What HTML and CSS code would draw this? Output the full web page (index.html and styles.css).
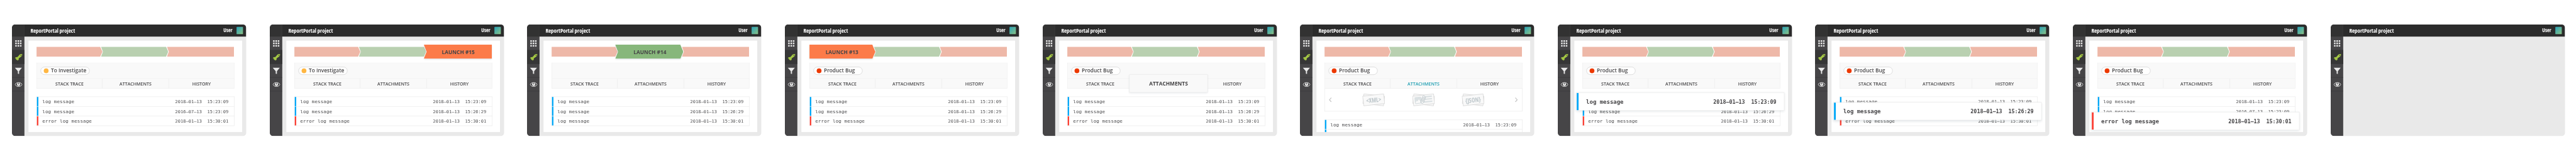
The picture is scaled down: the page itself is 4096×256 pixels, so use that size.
FILE: index.html
```html
<!DOCTYPE html>
<html lang="en">
<head>
<meta charset="utf-8">
<title>ReportPortal project</title>
<link rel="stylesheet" href="styles.css">
</head>
<body>
<svg class="defs" aria-hidden="true">
  <symbol id="i-grid" viewBox="0 0 16 16"><path d="M0 0h4v4H0zM6 0h4v4H6zM12 0h4v4h-4zM0 6h4v4H0zM6 6h4v4H6zM12 6h4v4h-4zM0 12h4v4H0zM6 12h4v4H6zM12 12h4v4h-4z"/></symbol>
  <symbol id="i-rocket" viewBox="0 0 19 17"><path fill-rule="evenodd" d="M18.8.2C15 0 12.6 1 10.8 3L6.600 8 2.600 8.300 0 10.600l3 .6c-.6 2 .4 3.900 3.300 4L6.700 17l3-2.600.3-3.400L15.500 7.200C18.200 5 19 3 18.800.2zM15.700 2.200a1.200 1.200 0 1 1 0 2.400 1.200 1.200 0 0 1 0-2.400z"/></symbol>
  <symbol id="i-funnel" viewBox="0 0 18 16"><path d="M0 0h18l-7.300 9v7l-3-.8V9z"/></symbol>
  <symbol id="i-eye" viewBox="0 0 19 12"><path fill="none" stroke="currentColor" stroke-width="1.400" d="M.7 6C3 2.500 6 .8 9.500.8S16 2.500 18.300 6C16 9.500 13 11.200 9.500 11.200S3 9.500.7 6z"/><circle cx="9.500" cy="5.600" r="4"/><circle class="pupil" cx="9.500" cy="4.100" r="1.500"/></symbol>
  <symbol id="i-sheets" viewBox="0 0 56 32"><path d="M4 1.300L55.300 7.300 52.700 31 1.300 25z"/><path d="M.7 7L53 1.300 55.500 25.300 3.700 31z"/></symbol>
</svg>
<main class="strip" id="strip"></main>
<script src="app.js"></script>
</body>
</html>
```
FILE: app.js
```js
const icon = (name) => `<svg class="icon icon-${name}"><use href="#i-${name}"/></svg>`;

const LAUNCHES = [['failed', 'LAUNCH #13'], ['passed', 'LAUNCH #14'], ['failed', 'LAUNCH #15']];
const TABS = ['STACK TRACE', 'ATTACHMENTS', 'HISTORY'];
const info = (date, time) => ({ level: 'info', text: 'log message', date, time });
const error = (date, time) => ({ level: 'error', text: 'error log message', date, time });
const FIRST = info('2018–01–13', '15:23:09');
const SECOND = info('2018–01–13', '15:26:29');
const OLD = info('2016–07–13', '15:23:09');
const THIRD = error('2018–01–13', '15:30:01');
const LOGS = [FIRST, SECOND, THIRD];

const SCREENS = [
  { defect: 'investigate', logs: [FIRST, OLD, THIRD] },
  { defect: 'investigate', launch: 2, logs: LOGS },
  { launch: 1, logs: [FIRST, SECOND, info('2018–01–13', '15:30:01')] },
  { defect: 'bug', launch: 0, logs: LOGS },
  { defect: 'bug', raisedTab: 1, logs: LOGS },
  { defect: 'bug', openTab: 1, logs: [FIRST, { level: 'info' }] },
  { defect: 'bug', raisedLog: 0, logs: LOGS },
  { defect: 'bug', raisedLog: 1, logs: LOGS },
  { defect: 'bug', raisedLog: 2, logs: [FIRST, OLD, THIRD] },
  null,
];

const DEFECTS = { investigate: 'To Investigate', bug: 'Product Bug' };

const logBody = (l) => l.text
  ? `<span class="message">${l.text}</span><span class="date">${l.date}</span><span class="time">${l.time}</span>`
  : '';

const carousel = `
  <div class="carousel">
    <svg class="chevron" viewBox="0 0 7 12"><path d="M6 .8L1.200 6 6 11.200"/></svg>
    <svg class="sheets" viewBox="0 0 56 32"><use href="#i-sheets"/><text x="9.500" y="22.500" textLength="37.500" lengthAdjust="spacingAndGlyphs" transform="rotate(-6 28 16)">&lt;XML&gt;</text></svg>
    <svg class="sheets" viewBox="0 0 56 32"><use href="#i-sheets"/>
      <g class="preview" transform="rotate(-6 28 16)">
        <rect x="6" y="7.500" width="17" height="17" rx="2.500"/><path d="M31 7.500h18.500v3.300H31zM31 13.500h18.500v3.300H31zM27 20h22.500v3.300H27z"/>
        <path class="hills" d="M8 22.500v-2l3-4 2 2 3.500-5 4 6.500v2.500z"/>
      </g>
      <path class="clip" transform="rotate(22 27 15)" d="M31 8v13a3.800 4.500 0 0 1-7.600 0V7a3.200 4 0 0 1 5.200 0v12.500a1.500 2 0 0 1-2.700 0V9"/>
    </svg>
    <svg class="sheets" viewBox="0 0 56 32"><use href="#i-sheets"/><text x="8.500" y="22.500" textLength="39" lengthAdjust="spacingAndGlyphs" transform="rotate(-6 28 16)">{JSON}</text></svg>
    <svg class="chevron" viewBox="0 0 7 12"><path d="M1 .8L5.800 6 1 11.200"/></svg>
  </div>`;

function card(s) {
  const launches = LAUNCHES.map(([status, label], i) =>
    `<div class="launch launch-${i + 1} ${s.launch === i ? 'active' : ''}"><div class="shape ${status}">${s.launch === i ? label : ''}</div></div>`).join('');
  const defect = s.defect ? `<span class="defect ${s.defect}">${DEFECTS[s.defect]}</span>` : '';
  const tabs = TABS.map((t, i) =>
    `<div class="tab ${s.openTab === i ? 'open' : ''}">${s.raisedTab === i ? `<div class="raised-tab">${t}</div>` : t}</div>`).join('');
  const logs = s.logs.map((l, i) =>
    `<div class="log ${l.level}">${s.raisedLog === i ? `<div class="raised-log ${l.level}">${logBody(l)}</div>` : logBody(l)}</div>`).join('');
  return `<section class="card">
    <div class="launches">${launches}</div>
    <div class="panel"><div class="defects">${defect}</div><div class="tabs">${tabs}</div>${s.openTab === undefined ? '' : carousel}</div>
    <div class="logs">${logs}</div>
  </section>`;
}

document.getElementById('strip').innerHTML = SCREENS.map((s) => `
  <div class="cell"><article class="window">
    <nav class="sidebar">
      <div class="logo"></div>
      <div class="item">${icon('grid')}</div>
      <div class="item selected">${icon('rocket')}</div>
      <div class="item">${icon('funnel')}</div>
      <div class="item">${icon('eye')}</div>
    </nav>
    <div class="main">
      <header class="header"><h1 class="title">ReportPortal project</h1><span class="user">User</span><span class="avatar"></span></header>
      <div class="content">${s ? card(s) : ''}</div>
    </div>
  </article></div>`).join('');
```
FILE: styles.css
```css
* { box-sizing: border-box; }

body {
  margin: 0;
  background: #fff;
  color: #464547;
  font-family: "Open Sans", "Noto Sans", sans-serif;
}

svg { display: block; flex: none; }
.defs { display: none; }

.strip {
  display: grid;
  grid-template-columns: repeat(10, 409.600px);
  width: 4096px;
  height: 256px;
  overflow: hidden;
}
.cell {
  height: 256px;
  padding: 39.040px 0 0 19.200px;
  overflow: hidden;
}

.window {
  display: flex;
  width: 582px;
  height: 277px;
  border-radius: 8px;
  overflow: hidden;
  background: #e9e9e9;
  transform: scale(.64);
  transform-origin: 0 0;
}

/* sidebar */
.sidebar { width: 31px; background: #464547; }
.logo { height: 30px; background: #323232; }
.item {
  display: flex;
  align-items: center;
  justify-content: center;
  height: 34px;
  padding: 1px 0 0 1px;
  border-bottom: 1px solid #39393a;
  color: #e9e9e9;
}
.item.selected { background: #363636; color: #a3c644; }
.icon { fill: currentColor; }
.icon-grid { width: 16px; height: 16px; }
.icon-rocket { width: 19px; height: 17px; }
.icon-funnel { width: 18px; height: 16px; }
.icon-eye { width: 19px; height: 12px; }
.pupil { fill: #464547; }

/* header */
.main { flex: 1; }
.header {
  display: flex;
  align-items: center;
  height: 30px;
  padding: 0 8px 0 15px;
  background: #2b2b2b;
  color: #fff;
  font-stretch: 75%;
  font-weight: 700;
}
.title { flex: 1; margin: 0; padding-bottom: 1px; font-size: 14px; line-height: 20px; }
.user { padding-bottom: 2px; font-size: 13px; line-height: 20px; }
.avatar {
  width: 16px;
  height: 18px;
  margin-left: 10px;
  border-radius: 1.500px;
  background: linear-gradient(135deg, #2aa3b8, #8bc183);
}

.content { padding: 10px; }
.card { height: 227px; padding: 15px 19px 0 20px; overflow: hidden; background: #fff; }

/* launch bar */
.launches { display: flex; align-items: center; width: 491px; height: 25px; }
.launch { flex: none; width: 167px; height: 25px; }
.launch-1 { width: 163.700px; }
.launch-2 { margin-left: -3.400px; }
.launch-3 { margin-left: -3.300px; }
.shape {
  display: flex;
  align-items: center;
  justify-content: center;
  height: 100%;
  font-size: 13px;
  font-weight: 700;
}
.failed { background: #eeb8a8; }
.passed { background: #b9d0b0; }
.launch-1 .shape { clip-path: polygon(0 0, calc(100% - 5.400px) 0, 100% 50%, calc(100% - 5.400px) 100%, 0 100%); }
.launch-2 .shape { clip-path: polygon(0 0, calc(100% - 5.400px) 0, 100% 50%, calc(100% - 5.400px) 100%, 0 100%, 4.700px 50%); }
.launch-3 .shape { clip-path: polygon(0 0, 100% 0, 100% 100%, 0 100%, 4.700px 50%); }

.launch.active { height: 35px; filter: drop-shadow(0 2px 2px rgba(0, 40, 60, .13)); }
.active .failed { background: #fc7b49; }
.active .passed { background: #87b77b; }
.launch-1.active .shape { padding-right: 2px; clip-path: polygon(0 0, calc(100% - 7.500px) 0, 100% 50%, calc(100% - 7.500px) 100%, 0 100%); }
.launch-2.active { width: 169.200px; margin-left: -5.600px; }
.launch-2.active .shape { padding-left: 3px; clip-path: polygon(0 0, calc(100% - 7.500px) 0, 100% 50%, calc(100% - 7.500px) 100%, 0 100%, 7px 50%); }
.launch-3.active { width: 169.400px; margin-left: -5.700px; }
.launch-3.active .shape { padding-left: 2px; clip-path: polygon(0 0, 100% 0, 100% 100%, 0 100%, 7px 50%); }

/* defect panel */
.panel { width: 492px; margin-top: 15px; border: 1px solid #e9e9e9; background: #fff; }
.defects { height: 39px; padding: 9px; border-bottom: 1px solid #e9e9e9; background: #f9f9f9; }
.defect {
  display: flex;
  align-items: center;
  gap: 6px;
  width: 122px;
  height: 20px;
  padding: 0 0 1px 7px;
  border: 1px solid #ccc;
  border-radius: 10px;
  background: #fff;
  font-size: 13px;
  font-weight: 600;
  line-height: 17px;
  white-space: nowrap;
}
.defect::before { content: ""; width: 12px; height: 12px; margin-top: 1px; border-radius: 50%; background: #ec3900; }
.defect.investigate::before { background: #ffb743; }

.tabs { display: grid; grid-template-columns: 163px 165px 162px; height: 23px; background: #f9f9f9; }
.tab {
  position: relative;
  display: flex;
  align-items: center;
  justify-content: center;
  border-right: 1px solid #e9e9e9;
  font-size: 11px;
  font-weight: 600;
}
.tab:last-child { border-right: 0; }
.tab.open { color: #1a9cb0; }
.raised-tab {
  position: absolute;
  z-index: 1;
  top: -11px;
  left: -10px;
  display: flex;
  align-items: center;
  justify-content: center;
  width: 195px;
  height: 45px;
  border: 1px solid #e9e9e9;
  background: #f9f9f9;
  box-shadow: 0 2px 5px rgba(0, 40, 60, .12);
  font-size: 13px;
  font-weight: 700;
}

/* attachments */
.carousel {
  display: flex;
  align-items: center;
  justify-content: space-between;
  height: 57px;
  padding: 0 11px 0 10px;
  border-top: 1px solid #e9e9e9;
}
.chevron { width: 7px; height: 12px; fill: none; stroke: #c4c4c4; stroke-width: 1.800; }
.sheets { width: 56px; height: 32px; margin: 0 -8px; fill: #f9f9f9; stroke: #ccc; stroke-width: 1; }
.sheets text { font: 700 16px "Open Sans", sans-serif; font-stretch: 75%; fill: #bfc8cc; stroke: none; }
.sheets .preview { fill: #dbe1e3; stroke: none; }
.sheets .hills { fill: #f9f9f9; }
.sheets .clip { fill: none; stroke: #bfc8cc; stroke-width: 1.400; }

/* log list */
.logs {
  width: 492px;
  margin-top: 20px;
  border: 1px solid #e9e9e9;
  border-bottom: 0;
  font-family: "DejaVu Sans Mono", monospace;
  font-size: 12px;
}
.log, .raised-log { display: flex; align-items: center; }
.log {
  position: relative;
  height: 24px;
  padding: 0 14px 0 13.500px;
  border-bottom: 1px solid #e9e9e9;
  color: #505052;
  background: linear-gradient(90deg, #00a8f8 4px, transparent 4px);
}
.log.error { background: linear-gradient(90deg, #fb4136 4px, transparent 4px); }
.message { flex: 1; }
.date, .time { padding-top: 1px; font-size: 11px; }
.time { margin-left: 13.200px; }
.raised-log {
  position: absolute;
  z-index: 1;
  top: -11px;
  left: -16px;
  width: 517px;
  height: 45px;
  padding: 0 19px 0 23.500px;
  border: 1px solid #e9e9e9;
  background: linear-gradient(90deg, #00a8f8 4px, #fff 4px);
  box-shadow: 0 2px 6px rgba(0, 40, 60, .12);
  color: #464547;
  font-size: 14px;
  font-weight: 700;
}
.raised-log.error { background: linear-gradient(90deg, #fb4136 4px, #fff 4px); }
.raised-log .date, .raised-log .time { font-size: 13px; }
.raised-log .time { margin-left: 15.600px; }
```
